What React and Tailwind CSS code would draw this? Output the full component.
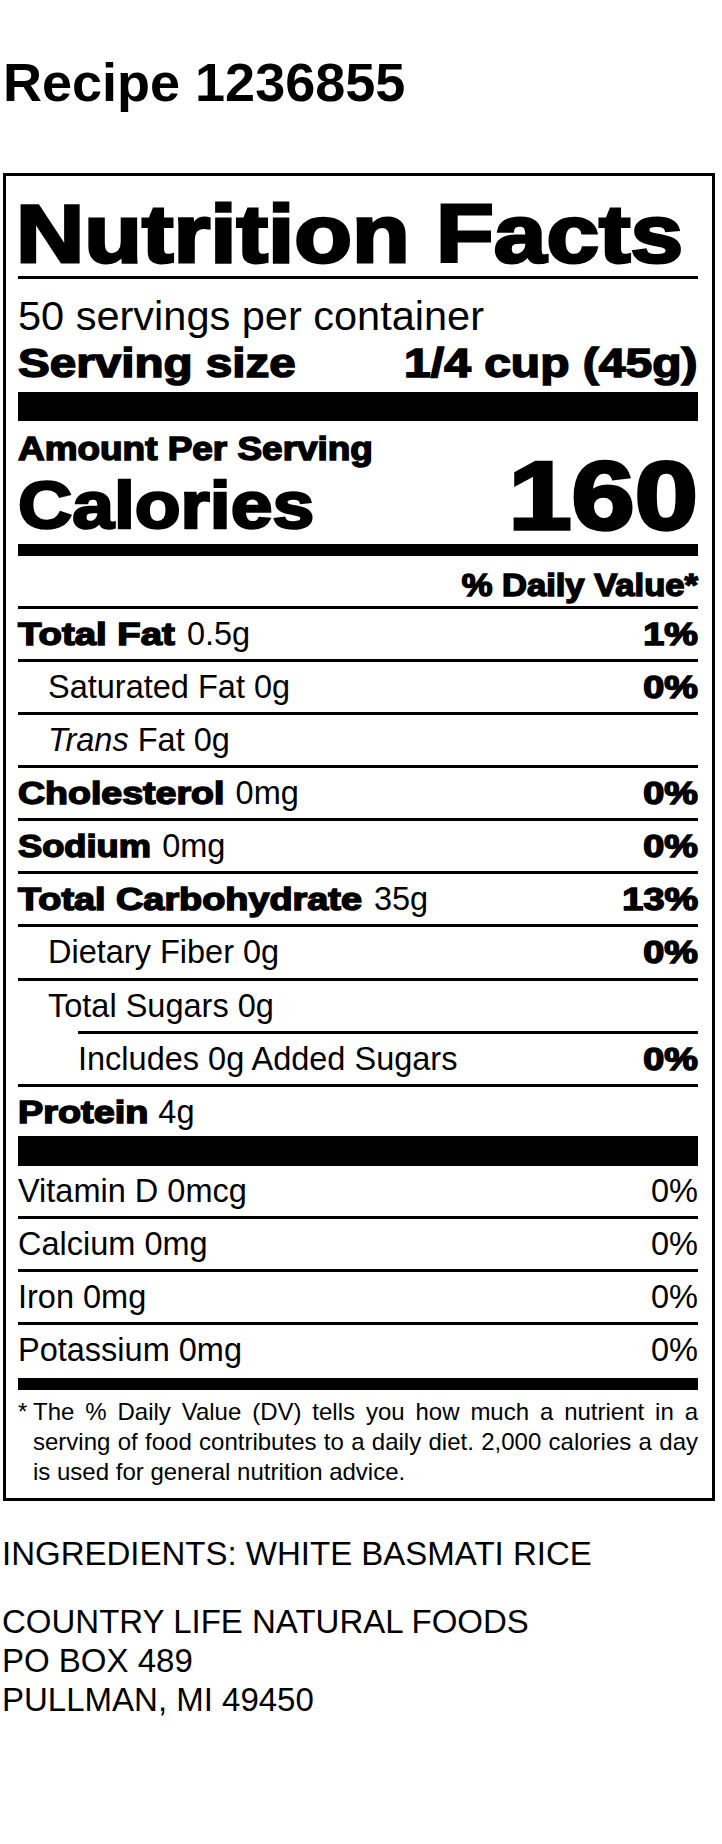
import React from "react";

// heavy label: Liberation Sans Bold widened to read like Helvetica Black
const B = ({ children, fit }) => (
  <span className={`inline-block origin-left font-bold text-[31px] [-webkit-text-stroke:1.5px_#000] ${fit}`}>
    {children}
  </span>
);

const Pct = ({ children }) => (
  <span className="inline-block origin-right scale-x-[1.22] font-bold text-[31px] [-webkit-text-stroke:1.5px_#000]">
    {children}
  </span>
);

const Row = ({ children, dv, pad = "", box = "h-[53.1px] border-t-[3px]" }) => {
  return (
    <div className={`${box} ${pad} border-black flex justify-between text-[32.5px] leading-[50px]`}>
      <div>{children}</div>
      {dv && <div>{dv}</div>}
    </div>
  );
};

const App = () => {
  return (
    <div className="w-[722px] min-h-[1844px] overflow-hidden bg-white text-black font-['Liberation_Sans',Arial,sans-serif]">
      <h1 className="pt-[55px] pl-[3px] text-[54px] leading-[54px] font-bold">Recipe 1236855</h1>

      {/* label */}
      <div className="mt-[64px] ml-[3px] w-[712px] border-[3px] border-black pl-[12px] pr-[14px]">
        <div className="w-fit pt-[16.6px] ml-[-2px] origin-left scale-x-[1.153] text-[82px] leading-[82px] font-bold [-webkit-text-stroke:3px_#000]">
          Nutrition Facts
        </div>
        <div className="mt-[1.4px] h-[3px] bg-black" />

        <div className="mt-[13.6px] text-[41.5px] leading-[46px]">50 servings per container</div>
        <div className="mt-[2.8px] flex justify-between text-[40px] leading-[44px] font-bold [-webkit-text-stroke:1.5px_#000]">
          <span className="origin-left scale-x-[1.19]">Serving size</span>
          <span className="origin-right scale-x-[1.2]">1/4 cup (45g)</span>
        </div>
        <div className="mt-[6.6px] h-[29px] bg-black" />

        <div className="pt-[9.7px] flex justify-between items-end">
          <div className="pb-[6.4px]">
            <div className="w-fit origin-left scale-x-[1.136] text-[32.5px] leading-[36px] font-bold [-webkit-text-stroke:1.5px_#000]">
              Amount Per Serving
            </div>
            <div className="w-fit mt-[3.9px] origin-left scale-x-[1.12] text-[67px] leading-[67px] font-bold [-webkit-text-stroke:2.5px_#000]">
              Calories
            </div>
          </div>
          <div className="mb-[2.6px] origin-right scale-x-[1.17] text-[97px] leading-[90px] font-bold [-webkit-text-stroke:3.5px_#000]">
            160
          </div>
        </div>
        <div className="h-[12px] bg-black" />

        <div className="mt-[11.8px] mb-[3.2px] flex justify-end text-[31px] leading-[35px] font-bold [-webkit-text-stroke:1.5px_#000]">
          <span className="origin-right scale-x-[1.115]">% Daily Value*</span>
        </div>

        <Row dv={<Pct>1%</Pct>}>
          <B fit="scale-x-[1.235] mr-[33px]">Total Fat</B> 0.5g
        </Row>
        <Row dv={<Pct>0%</Pct>} pad="pl-[30px]">
          Saturated Fat 0g
        </Row>
        <Row pad="pl-[30px]">
          <span className="italic">Trans</span> Fat 0g
        </Row>
        <Row dv={<Pct>0%</Pct>}>
          <B fit="scale-x-[1.21] mr-[38px]">Cholesterol</B> 0mg
        </Row>
        <Row dv={<Pct>0%</Pct>}>
          <B fit="scale-x-[1.17] mr-[21.5px]">Sodium</B> 0mg
        </Row>
        <Row dv={<Pct>13%</Pct>}>
          <B fit="scale-x-[1.22] mr-[65px]">Total Carbohydrate</B> 35g
        </Row>
        <Row dv={<Pct>0%</Pct>} pad="pl-[30px]">
          Dietary Fiber 0g
        </Row>
        <Row pad="pl-[30px]">Total Sugars 0g</Row>
        <Row dv={<Pct>0%</Pct>} pad="ml-[60px]">
          Includes 0g Added Sugars
        </Row>
        <Row box="h-[52px] border-t-[3px]">
          <B fit="scale-x-[1.22] mr-[24.5px]">Protein</B> 4g
        </Row>
        <div className="h-[30px] bg-black" />

        <Row dv="0%" box="h-[50.5px]">
          Vitamin D 0mcg
        </Row>
        <Row dv="0%" box="h-[53px] border-t-[3px]">
          Calcium 0mg
        </Row>
        <Row dv="0%" box="h-[53px] border-t-[3px]">
          Iron 0mg
        </Row>
        <Row dv="0%" box="h-[55.5px] border-t-[3px]">
          Potassium 0mg
        </Row>
        <div className="h-[12px] bg-black" />

        <div className="pt-[7.6px] pb-[11.5px] flex text-[24px] leading-[29.6px]">
          <span className="w-[15px] shrink-0">*</span>
          <p className="flex-1 text-justify">
            The % Daily Value (DV) tells you how much a nutrient in a serving of food contributes to a
            daily diet. 2,000 calories a day is used for general nutrition advice.
          </p>
        </div>
      </div>

      <div className="mt-[33px] pl-[2px] text-[33px] leading-[39.3px]">
        <p>INGREDIENTS: WHITE BASMATI RICE</p>
        <p className="mt-[28.7px]">COUNTRY LIFE NATURAL FOODS</p>
        <p>PO BOX 489</p>
        <p>PULLMAN, MI 49450</p>
      </div>
    </div>
  );
};

export default App;
